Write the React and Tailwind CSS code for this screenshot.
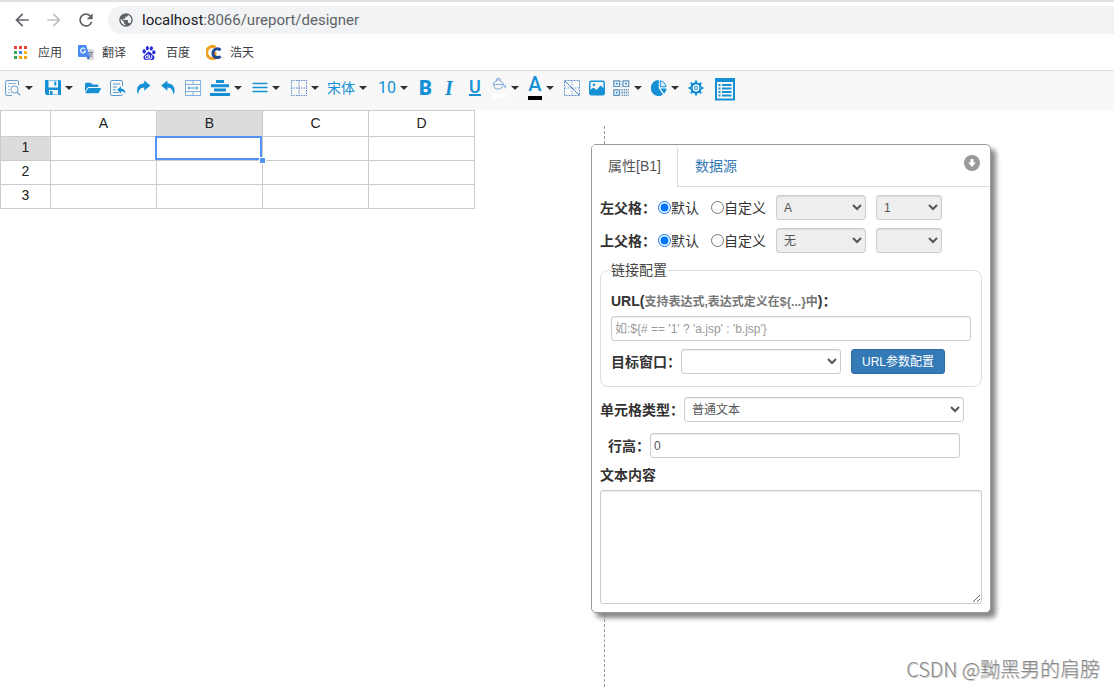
import React, { useState } from 'react';
import { MdArrowBack, MdArrowForward, MdPublic, MdRefresh } from 'react-icons/md';
import { FaFolderOpen } from 'react-icons/fa';
import { SiBaidu } from 'react-icons/si';

const COLUMNS = ['A', 'B', 'C', 'D'];
const ROWS = [1, 2, 3];

const APP_DOTS = [
  '#ea4335', '#ea4335', '#ea4335',
  '#34a853', '#4285f4', '#fbbc05',
  '#34a853', '#f4a400', '#f4a400',
];

const CONTROL = 'h-[25px] rounded-[3px] border border-[#ccc] px-[3px] text-xs text-[#555] shadow-[inset_0_1px_1px_rgba(0,0,0,0.08)] disabled:bg-[#eee] disabled:opacity-100';

/* ---------- icons ---------- */

function Svg({ w = 16, h = 16, children }) {
  return (
    <svg width={w} height={h} viewBox={`0 0 ${w} ${h}`} fill="none" stroke="currentColor" className="shrink-0" aria-hidden="true">
      {children}
    </svg>
  );
}

const PreviewIcon = () => (
  <Svg>
    <g stroke="#6a9fd0">
      <path d="M13.5 5V2Q13.5 .5 12 .5H2Q.5 .5 .5 2V14Q.5 15.5 2 15.5H7" />
      <path d="M3 3.5H11M3 6.5H5M3 9.5H4.5M3 12.5H5" strokeWidth=".8" />
      <circle cx="9.5" cy="9.5" r="3.6" />
      <path d="M12 12.2L15.2 15.3" strokeWidth="1.2" />
    </g>
  </Svg>
);

const SaveIcon = () => (
  <Svg>
    <path d="M1 0H3.5V7.5H13V0H14.5Q16 0 16 1.5V15H13V10H4V15H1.5L0 13.5V1Q0 0 1 0Z" fill="currentColor" stroke="none" />
    <path d="M4 .6H12.5M4 14.4H12.5" stroke="#7fbfe6" />
    <path d="M9.3 1.5H11.3V5.5H9.3ZM5 11H7.5V15H5Z" fill="currentColor" stroke="none" />
  </Svg>
);

const ImportIcon = () => (
  <Svg>
    <path d="M12.5 6V2Q12.5 .5 11 .5H2Q.5 .5 .5 2V14Q.5 15.5 2 15.5H11Q12.5 15.5 12.5 14" stroke="#5a9bd2" />
    <path d="M3 4H10M3 7H7M3 9.8H6M3 12.5H9" stroke="#5a9bd2" />
    <path d="M11 6.2V8.4C14 8.6 15.6 10.6 15.6 14C14.6 12 13.4 11.3 11 11.3V13.4L7.2 9.8Z" fill="currentColor" stroke="none" />
  </Svg>
);

const RedoIcon = () => (
  <Svg w={15}>
    <path d="M8.2 .4L14.4 5.5L8.2 10.8V7.6C4.6 7.8 2.5 9.8 2.2 15C-.6 9 1.7 3.6 8.2 3.2Z" fill="currentColor" stroke="none" />
  </Svg>
);

const UndoIcon = () => (
  <Svg w={15}>
    <path d="M6.4 .4L.2 5.5L6.4 10.8V7.6C10 7.8 12.1 9.8 12.4 15C15.2 9 12.9 3.6 6.4 3.2Z" fill="currentColor" stroke="none" />
  </Svg>
);

const MergeIcon = () => (
  <Svg>
    <path d="M.5 .5H15.5V15.5H.5ZM.5 4.5H15.5M.5 11.5H15.5M8 .5V4.5M8 11.5V15.5" stroke="#7fb0dc" />
    <path d="M3 8H13M4.5 6.5L3 8L4.5 9.5M11.5 6.5L13 8L11.5 9.5" stroke="#4a9bd6" />
  </Svg>
);

const AlignIcon = () => (
  <Svg w={20}>
    <path d="M6 1.5H14M1 5.7H19M4 10H16M0 14.5H20" strokeWidth="3" />
  </Svg>
);

const MiddleIcon = () => (
  <Svg>
    <path d="M.5 3.5H15.5M.5 7.5H15.5M.5 11.5H15.5" strokeWidth="1.6" />
  </Svg>
);

const BorderIcon = () => (
  <Svg>
    <path d="M0 .5H16M0 8H16M0 15.5H16M.5 0V16M8 0V16M15.5 0V16" stroke="#5c8fcb" strokeDasharray="1.5 1" />
  </Svg>
);

const BucketIcon = () => (
  <Svg w={15} h={22}>
    <path d="M1 6.5L6.5 2.5L12 7L9 11.5Q6 13 3 11.5Z" stroke="#7fa9d6" />
    <path d="M2 7.5H11M4 4.5Q4 1 6.5 1Q8.5 1 8.5 4" stroke="#7fa9d6" />
    <path d="M13 7.5Q14.8 10.2 13 11.2Q11.4 10.2 13 7.5Z" fill="#7fa9d6" stroke="none" />
    <path d="M0 17H14V21H0Z" fill="#fff" stroke="none" />
  </Svg>
);

const DiagonalIcon = () => (
  <Svg>
    <path d="M.5 .5H15.5V15.5H.5Z" stroke="#5c8fcb" strokeDasharray="2 1" />
    <path d="M8 1V15M1 8H15" stroke="#8fb3db" strokeDasharray="1.5 1" />
    <path d="M1 1L15 15" stroke="#4a86c6" />
  </Svg>
);

const ImageIcon = () => (
  <Svg>
    <rect x=".8" y="1.3" width="14.4" height="13.4" rx="1.5" strokeWidth="1.5" />
    <path d="M1 10L4.5 7.5L7.5 10L11.5 5.5L15 8.5V14.5H1Z" fill="currentColor" stroke="none" />
    <circle cx="5" cy="4.8" r="1.3" fill="currentColor" stroke="none" />
  </Svg>
);

const QrIcon = () => (
  <Svg w={17}>
    <g stroke="#5d91bd" strokeWidth="1.2">
      <path d="M.8 .8H6.5V6.5H.8ZM10 .8H15.7V6.5H10ZM.8 9.8H6.5V15.4H.8Z" />
      <path d="M8.5 9.5H16M9 11H16M8.5 12.5H16M9 14H16M8.5 15.5H16" strokeDasharray="1.3 .9" strokeWidth="1" />
      <path d="M8.2 1V15" strokeDasharray="1 1.8" strokeWidth=".8" />
    </g>
    <path d="M2.8 2.8H4.6V4.6H2.8ZM12 2.8H13.8V4.6H12ZM2.8 11.7H4.6V13.5H2.8Z" fill="currentColor" stroke="none" />
  </Svg>
);

const PieIcon = () => (
  <Svg>
    <path d="M7.8 0V8L12 14.8A8 8 0 1 1 7.8 0Z" fill="currentColor" stroke="none" />
    <path d="M9.3 .8A7 7 0 0 1 15 6.8H9.3Z" fill="#d8ecf8" />
    <path d="M9.5 8.5H15.5Q15.5 11.8 13 13.8Z" fill="currentColor" stroke="none" />
  </Svg>
);

const GearIcon = () => (
  <Svg>
    <circle cx="8" cy="8" r="4.6" strokeWidth="2.4" />
    <circle cx="8" cy="8" r="1.6" strokeWidth="1" />
    <path d="M8 .6V3M8 13V15.4M.6 8H3M13 8H15.4M2.8 2.8L4.5 4.5M11.5 11.5L13.2 13.2M2.8 13.2L4.5 11.5M11.5 4.5L13.2 2.8" strokeWidth="2.2" />
  </Svg>
);

const PropertyIcon = () => (
  <Svg w={20} h={26}>
    <path d="M1 4.5H19V24.5H1Z" strokeWidth="2" />
    <path d="M0 3H20V7H0Z" fill="currentColor" stroke="none" />
    <path d="M3.5 10H5.5M3.5 13.5H5.5M3.5 17H5.5M3.5 20.5H5.5M7 10H16.5M7 13.5H16.5M7 17H16.5M7 20.5H16.5" strokeWidth="2" />
  </Svg>
);

const UnderlineIcon = () => (
  <span className="w-3 border-b-2 border-current text-center text-lg leading-[14px] font-medium">U</span>
);

const ColorIcon = () => (
  <span className="w-[14px] border-b-4 border-black pb-1 text-center text-xl leading-4 font-medium">A</span>
);

const Caret = () => (
  <span className="h-0 w-0 border-x-4 border-t-4 border-x-transparent border-t-[#333]" />
);

const TOOLS = [
  { title: '预览', icon: <PreviewIcon />, width: 'w-[31px]', caret: true },
  { title: '保存', icon: <SaveIcon />, width: 'w-[31px]', caret: true },
  { title: '打开', icon: <FaFolderOpen className="size-4" />, width: 'w-4' },
  { title: '导入', icon: <ImportIcon />, width: 'w-[17px]' },
  { title: '重做', icon: <RedoIcon />, width: 'w-4' },
  { title: '撤销', icon: <UndoIcon />, width: 'w-[15px]' },
  { title: '合并单元格', icon: <MergeIcon />, width: 'w-4' },
  { title: '水平对齐', icon: <AlignIcon />, width: 'w-[33px]', caret: true },
  { title: '垂直对齐', icon: <MiddleIcon />, width: 'w-[30px]', caret: true },
  { title: '边框', icon: <BorderIcon />, width: 'w-[27px]', caret: true },
  { title: '字体', icon: <span className="text-sm">宋体</span>, width: 'w-[42px]', caret: true },
  { title: '字号', icon: <span className="text-base">10</span>, width: 'w-8', caret: true },
  { title: '加粗', icon: <span className="text-xl font-black">B</span>, width: 'w-[17px]' },
  { title: '斜体', icon: <span className="font-['Liberation_Serif',serif] text-xl font-bold italic">I</span>, width: 'w-[15px]' },
  { title: '下划线', icon: <UnderlineIcon />, width: 'w-[14px]' },
  { title: '背景色', icon: <BucketIcon />, width: 'w-[27px]', caret: true },
  { title: '前景色', icon: <ColorIcon />, width: 'w-[27px]', caret: true },
  { title: '斜表头', icon: <DiagonalIcon />, width: 'w-4' },
  { title: '图片', icon: <ImageIcon />, width: 'w-[15px]' },
  { title: '二维码', icon: <QrIcon />, width: 'w-[29px]', caret: true },
  { title: '图表', icon: <PieIcon />, width: 'w-[28px]', caret: true },
  { title: '设置', icon: <GearIcon />, width: 'w-[18px]' },
  { title: '属性', icon: <PropertyIcon />, width: 'w-5' },
];

/* ---------- browser ---------- */

const AppsIcon = () => (
  <Svg w={14} h={14}>
    {APP_DOTS.map((color, i) => (
      <rect key={i} x={(i % 3) * 5} y={Math.floor(i / 3) * 5} width="3" height="3" fill={color} stroke="none" />
    ))}
  </Svg>
);

const TranslateIcon = () => (
  <Svg>
    <path d="M6 4H15Q16 4 16 5V14Q16 15 15 15H9Z" fill="#dadce0" stroke="none" />
    <path d="M1 0H8L12 12H1Q0 12 0 11V1Q0 0 1 0Z" fill="#4a8af4" stroke="none" />
    <path d="M9 12H12L10 15Z" fill="#2f65c9" stroke="none" />
    <path d="M7.2 4.2A2.5 2.5 0 1 0 7.5 6.2H5.3" stroke="#fff" strokeWidth="1.1" />
    <path d="M10.5 7.5H15M12.8 6.5V7.5M14.3 7.5Q13.5 10.5 11.5 12M11.5 8.5Q12.5 11 14.5 12" stroke="#6b7785" strokeWidth=".9" />
  </Svg>
);

const HaotianIcon = () => (
  <Svg>
    <path d="M9.5 2.2A6 6 0 1 0 9 13V8.5H6" stroke="#f0a020" strokeWidth="3" />
    <path d="M14.5 5.2A4.4 4.4 0 1 0 14.5 11.2" stroke="#254a94" strokeWidth="3" />
  </Svg>
);

const BOOKMARKS = [
  { label: '应用', icon: <AppsIcon />, width: 'w-16' },
  { label: '翻译', icon: <TranslateIcon />, width: 'w-16' },
  { label: '百度', icon: <SiBaidu className="size-[14px] text-[#2529d8]" />, width: 'w-16' },
  { label: '浩天', icon: <HaotianIcon />, width: 'w-16' },
];

function BrowserBar() {
  return (
    <header className="border-b border-[#dadce0] border-t-2 border-t-[#dee1e6] bg-white">
      <div className="flex h-9 items-center pl-3">
        <button type="button" aria-label="back" className="mr-3 text-[#5f6368]"><MdArrowBack className="size-5" /></button>
        <button type="button" aria-label="forward" className="mr-3 text-[#bdc1c6]"><MdArrowForward className="size-5" /></button>
        <button type="button" aria-label="reload" className="mr-3 text-[#5f6368]"><MdRefresh className="size-5" /></button>
        <div className="flex h-7 flex-1 items-center gap-2 rounded-l-full bg-[#f1f3f4] pl-[10px] font-[Roboto,sans-serif] text-[15px] text-[#5f6368]">
          <MdPublic className="size-4" />
          <span><span className="text-[#202124]">localhost</span>:8066/ureport/designer</span>
        </div>
      </div>
      <nav className="flex h-8 items-center pb-0.5 pl-[14px]">
        {BOOKMARKS.map((b) => (
          <a key={b.label} href="#" className={`flex items-center gap-2 text-xs text-[#3c4043] ${b.width}`}>
            <span className="flex w-4 shrink-0">{b.icon}</span>
            {b.label}
          </a>
        ))}
      </nav>
    </header>
  );
}

function Toolbar() {
  return (
    <div role="toolbar" className="flex h-[39px] items-center gap-[9px] bg-[#f8f8f8] pb-1.5 pl-[5px] text-[#1590d5]">
      {TOOLS.map((tool) => (
        <button
          key={tool.title}
          type="button"
          title={tool.title}
          className={`flex shrink-0 items-center gap-1 font-[Roboto,'Noto_Sans_CJK_SC',sans-serif] ${tool.width}`}
        >
          {tool.icon}
          {tool.caret && <Caret />}
        </button>
      ))}
    </div>
  );
}

/* ---------- sheet ---------- */

function Sheet() {
  return (
    <table className="w-[475px] table-fixed border-collapse text-center text-sm text-[#222]">
      <thead>
        <tr className="h-[26px] leading-5">
          <th className="w-[50px] border border-[#ccc]" />
          {COLUMNS.map((col) => (
            <th key={col} className={`border border-[#ccc] p-0 pb-0.5 font-normal ${col === 'B' ? 'bg-[#dcdcdc]' : ''}`}>{col}</th>
          ))}
        </tr>
      </thead>
      <tbody>
        {ROWS.map((row) => (
          <tr key={row} className="h-6 leading-5">
            <th className={`border border-[#ccc] p-0 pb-[3px] font-normal ${row === 1 ? 'bg-[#dcdcdc]' : ''}`}>{row}</th>
            {COLUMNS.map((col) => (
              <td key={col} className="relative border border-[#ccc] p-0">
                {row === 1 && col === 'B' && (
                  <>
                    <div className="absolute -top-px right-0 bottom-0 -left-0.5 border-2 border-[#5292f7]" />
                    <div className="absolute -right-1 -bottom-1 size-[7px] border border-white bg-[#5292f7]" />
                  </>
                )}
              </td>
            ))}
          </tr>
        ))}
      </tbody>
    </table>
  );
}

/* ---------- property panel ---------- */

function ParentCellRow({ label, name, cell, row }) {
  return (
    <div className="flex items-center">
      <span className="mr-0.5 font-bold">{label}</span>
      <label className="mr-3 flex items-center">
        <input type="radio" name={name} defaultChecked className="size-[13px]" />默认
      </label>
      <label className="mr-[10px] flex items-center">
        <input type="radio" name={name} className="size-[13px]" />自定义
      </label>
      <select disabled aria-label={`${label}列`} className={`mr-[10px] w-[90px] ${CONTROL}`}>
        <option>{cell}</option>
      </select>
      <select disabled aria-label={`${label}行`} className={`w-[66px] ${CONTROL}`}>
        <option>{row}</option>
      </select>
    </div>
  );
}

function PropertyPanel() {
  const [height, setHeight] = useState('0');

  return (
    <section className="absolute top-[34px] left-[591px] w-[400px] rounded-[5px] border border-[#999] bg-white text-sm leading-5 text-[#333] shadow-[5px_5px_5px_#888]">
      <div className="flex border-b border-[#ddd]">
        <button type="button" className="-mb-px rounded-t border-r border-[#ddd] bg-white px-4 py-[11px] text-[#555]">属性[B1]</button>
        <button type="button" className="px-[17px] text-[#337ab7]">数据源</button>
        <button type="button" aria-label="收起" className="mt-[10px] mr-[10px] ml-auto self-start text-[#999]">
          <Svg>
            <circle cx="8" cy="8" r="8" fill="currentColor" stroke="none" />
            <path d="M6.5 4H9.5V7.5H12L8 12L4 7.5H6.5Z" fill="#fff" stroke="none" />
          </Svg>
        </button>
      </div>

      <div className="p-2">
        <div className="flex flex-col gap-2">
          <ParentCellRow label="左父格：" name="left-parent" cell="A" row="1" />
          <ParentCellRow label="上父格：" name="top-parent" cell="无" row="" />
        </div>

        <fieldset className="mt-[7px] rounded-lg border border-[#ddd] px-[10px] pb-3">
          <legend className="text-[#444]">链接配置</legend>
          <label htmlFor="url" className="mt-[11px] block font-bold">
            URL(<span className="text-xs text-[#777]">支持表达式,表达式定义在${'{...}'}中</span>)：
          </label>
          <input
            id="url"
            type="text"
            placeholder="如:${# == '1' ? 'a.jsp' : 'b.jsp'}"
            className={`mt-[5px] block w-full placeholder:text-[#999] ${CONTROL}`}
          />
          <div className="mt-2 flex items-center">
            <label htmlFor="target" className="font-bold">目标窗口：</label>
            <select id="target" className={`mr-[10px] w-40 ${CONTROL}`}>
              <option />
            </select>
            <button type="button" className="h-[25px] rounded-[3px] border border-[#2e6da4] bg-[#337ab7] px-[10px] text-xs text-white">URL参数配置</button>
          </div>
        </fieldset>

        <div className="mt-[10px] flex items-center">
          <label htmlFor="cell-type" className="font-bold">单元格类型：</label>
          <select id="cell-type" className={`w-[280px] ${CONTROL}`}>
            <option>普通文本</option>
          </select>
        </div>

        <div className="mt-[11px] flex items-center pl-2">
          <label htmlFor="row-height" className="font-bold">行高：</label>
          <input
            id="row-height"
            type="text"
            value={height}
            onChange={(e) => setHeight(e.target.value)}
            className={`w-[310px] ${CONTROL}`}
          />
        </div>

        <label htmlFor="content" className="mt-[7px] block font-bold">文本内容</label>
        <textarea
          id="content"
          className="mt-[5px] block h-[114px] w-full rounded-[3px] border border-[#ccc] p-1 text-xs shadow-[inset_0_1px_1px_rgba(0,0,0,0.08)]"
        />
      </div>
    </section>
  );
}

function App() {
  return (
    <div className="flex min-h-screen flex-col bg-white font-['Liberation_Sans','Noto_Sans_CJK_SC',sans-serif]">
      <BrowserBar />
      <Toolbar />
      <main className="relative flex-1">
        <Sheet />
        {/* page width guide */}
        <div className="absolute top-4 bottom-0 left-[604px] border-l border-dashed border-[#999]" />
        <PropertyPanel />
        <div className="absolute right-[14px] bottom-1 font-['Noto_Sans_CJK_SC',sans-serif] text-xl font-light text-[#888] [text-shadow:1px_1px_0_#ccc]">
          CSDN @黝黑男的肩膀
        </div>
      </main>
    </div>
  );
}

export default App;
